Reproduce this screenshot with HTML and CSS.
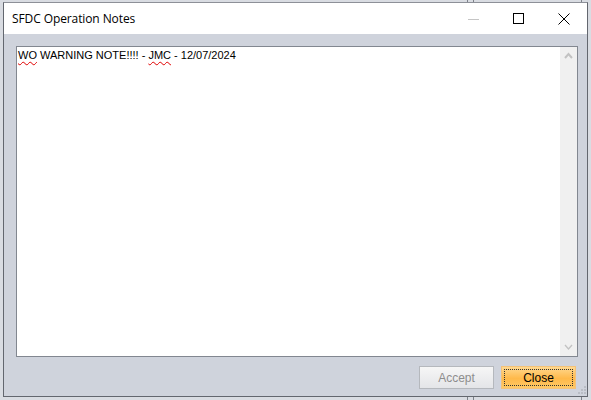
FILE: index.html
```html
<!DOCTYPE html>
<html>
<head>
<meta charset="utf-8">
<link rel="stylesheet" href="styles.css">
</head>
<body>
<div class="desktop">
  <div class="bg-line l1"></div>
  <div class="bg-line l2"></div>
  <div class="bg-line l3"></div>
  <div class="window">
    <div class="titlebar">
      <span class="title">SFDC Operation Notes</span>
      <div class="controls">
        <span class="ctl min"><svg width="12" height="12" viewBox="0 0 12 12"><line x1="0" y1="6.5" x2="11" y2="6.5" stroke="#c5c5c5" stroke-width="1"/></svg></span>
        <span class="ctl max"><svg width="12" height="12" viewBox="0 0 12 12"><rect x="0.5" y="0.5" width="10" height="10" fill="none" stroke="#000" stroke-width="1"/></svg></span>
        <span class="ctl close"><svg width="12" height="12" viewBox="0 0 12 12"><path d="M0.5 0.5 L11.5 11.5 M11.5 0.5 L0.5 11.5" stroke="#000" stroke-width="1"/></svg></span>
      </div>
    </div>
    <div class="client">
      <div class="textbox">
        <div class="text"><span class="sp">WO</span> WARNING NOTE!!!! - <span class="sp">JMC</span> - 12/07/2024</div>
        <div class="scrollbar">
          <svg width="17" height="14" viewBox="0 0 17 14"><path d="M5 9 L8.5 5 L12 9" fill="none" stroke="#c2c2c2" stroke-width="2"/></svg>
          <svg width="17" height="14" viewBox="0 0 17 14"><path d="M5 5 L8.5 9 L12 5" fill="none" stroke="#c2c2c2" stroke-width="1.3"/></svg>
        </div>
      </div>
      <div class="buttons">
        <button class="btn accept">Accept</button>
        <button class="btn primary"><span class="focus">Close</span></button>
      </div>
      <div class="grip">
        <svg width="8" height="8" viewBox="0 0 8 8" fill="#b9bdc5"><rect x="6" y="0" width="2" height="2"/><rect x="3" y="3" width="2" height="2"/><rect x="6" y="3" width="2" height="2"/><rect x="0" y="6" width="2" height="2"/><rect x="3" y="6" width="2" height="2"/><rect x="6" y="6" width="2" height="2"/></svg>
      </div>
    </div>
  </div>
</div>
</body>
</html>
```
FILE: styles.css
```css
html, body {
  margin: 0;
  padding: 0;
}
body {
  width: 591px;
  height: 400px;
  overflow: hidden;
  background: #d9dce2;
}
.desktop {
  position: relative;
  width: 591px;
  height: 400px;
  padding: 2px 0 0 3px;
  box-sizing: border-box;
}
.bg-line {
  position: absolute;
  background: #7d8189;
  width: 1px;
  height: 400px;
  top: 0;
}
.l1 { left: 467px; }
.l2 { left: 473px; }
.l3 { left: 581px; }
.window {
  position: relative;
  width: 585px;
  height: 395px;
  box-sizing: border-box;
  border: 1px solid #63676f;
  border-top-color: #8d9098;
  background: #cfd3dc;
  display: flex;
  flex-direction: column;
}
.titlebar {
  height: 31px;
  background: #ffffff;
  display: flex;
  align-items: center;
  justify-content: space-between;
  flex: none;
}
.title {
  font-family: "Open Sans", "Noto Sans", sans-serif;
  font-size: 12px;
  color: #000;
  padding-left: 8px;
  letter-spacing: -0.1px;
}
.controls {
  display: flex;
  height: 31px;
}
.ctl {
  width: 45px;
  display: flex;
  align-items: center;
  justify-content: center;
}
.ctl.close { width: 46px; }
.client {
  flex: 1;
  position: relative;
  padding: 12px 9px 0 12px;
  display: flex;
  flex-direction: column;
}
.textbox {
  height: 311px;
  box-sizing: border-box;
  border: 1px solid #828790;
  background: #fff;
  display: flex;
  justify-content: space-between;
}
.text {
  font-family: "Liberation Sans", Arial, sans-serif;
  font-size: 11px;
  color: #000;
  padding: 2px 0 0 1px;
  line-height: 13px;
}
.sp {
  text-decoration: underline wavy #e00000;
  text-decoration-thickness: 1px;
  text-underline-offset: 2px;
}
.scrollbar {
  width: 17px;
  background: #f0f0f0;
  display: flex;
  flex-direction: column;
  justify-content: space-between;
  padding: 2px 0;
}
.scrollbar svg { display: block; }
.buttons {
  display: flex;
  justify-content: flex-end;
  gap: 7px;
  margin-top: 9px;
  margin-right: 2px;
}
.btn {
  width: 75px;
  height: 23px;
  box-sizing: border-box;
  font-family: "Liberation Sans", Arial, sans-serif;
  font-size: 12px;
  padding: 0;
  margin: 0;
}
.accept {
  border: 1px solid #b5b8bd;
  background: linear-gradient(#f6f6f6, #e4e5e8);
  color: #8d8d8d;
}
.primary {
  border: 1px solid #f3c27b;
  background: linear-gradient(#ffd88f, #ffb94a 55%, #ffc965);
  color: #000;
  padding: 2px;
}
.focus {
  display: flex;
  align-items: center;
  justify-content: center;
  height: 100%;
  box-sizing: border-box;
  border: 1px dotted #333;
}
.grip {
  position: absolute;
  right: 1px;
  bottom: 2px;
  line-height: 0;
}
```
